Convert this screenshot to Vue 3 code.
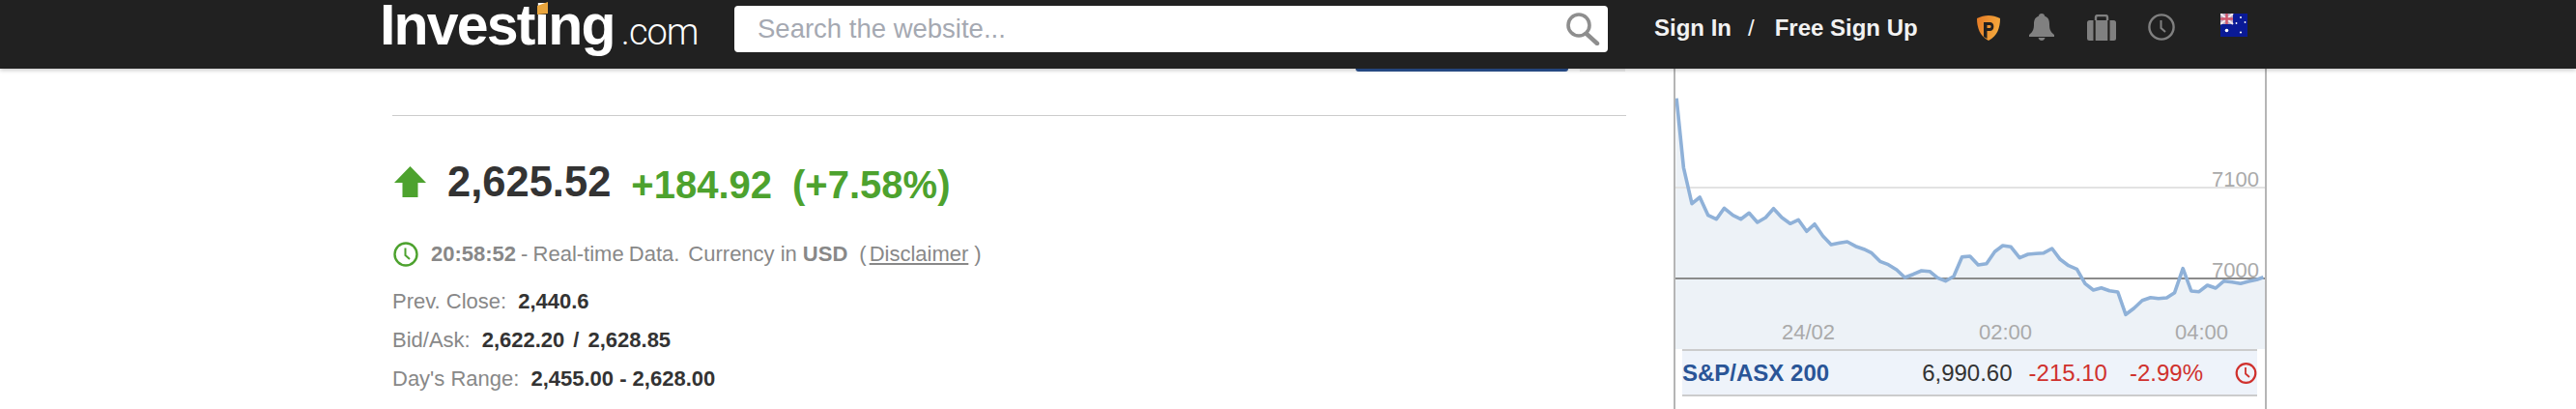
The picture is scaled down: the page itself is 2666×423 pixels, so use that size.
<template>
  <div class="page">
    <header class="topbar">
      <a class="logo">
        <span class="logo-main">Investing</span><span class="logo-com">.com</span>
        <svg class="logo-dot" width="12" height="13" viewBox="0 0 12 13"><polygon points="0,4 11,0 11,12 0,13" fill="#e9a53d" /></svg>
      </a>
      <div class="search">
        <span class="search-text">Search the website...</span>
        <svg width="36" height="34" viewBox="0 0 36 34">
          <circle cx="14" cy="13" r="11" fill="none" stroke="#8e8e8e" stroke-width="3.6" />
          <path d="M22 22 L33 32" stroke="#8e8e8e" stroke-width="4.4" stroke-linecap="round" />
        </svg>
      </div>
      <nav class="auth">
        <span>Sign In</span>
        <span class="slash">/</span>
        <span>Free Sign Up</span>
      </nav>
      <div class="icons">
        <svg class="ic-p" width="24" height="26" viewBox="0 0 24 26">
          <defs>
            <linearGradient id="shield" x1="0" y1="0" x2="1" y2="0.3">
              <stop offset="0" stop-color="#e57a25" />
              <stop offset="1" stop-color="#f4a83c" />
            </linearGradient>
          </defs>
          <path d="M12 0 C16 0 20 1 24 3 C24 13 21 21 12 26 C3 21 0 13 0 3 C4 1 8 0 12 0 Z" fill="url(#shield)" />
          <path d="M7 7 H14 C18.5 7 18.5 16 14 16 H10.5 V24 L7 22 Z M10.5 10 V13 H13.5 C15 13 15 10 13.5 10 Z" fill="#23211f" fill-rule="evenodd" />
        </svg>
        <svg class="ic-bell" width="26" height="28" viewBox="0 0 26 28">
          <path d="M13 0 C15 0 16 1 16 2.5 C20 4 21 7 21 11 C21 16 22 19 26 22 V24 H0 V22 C4 19 5 16 5 11 C5 7 6 4 10 2.5 C10 1 11 0 13 0 Z" fill="#808080" />
          <path d="M9.5 25 H16.5 C16 27 14.5 28 13 28 C11.500 28 10 27 9.500 25 Z" fill="#808080" />
        </svg>
        <svg class="ic-case" width="30" height="27" viewBox="0 0 30 27">
          <path d="M9 7 V3 C9 1.500 10 1 11 1 H19 C20 1 21 1.500 21 3 V7" fill="none" stroke="#808080" stroke-width="2.4" />
          <rect x="0" y="6" width="30" height="21" rx="2.500" fill="#808080" />
          <rect x="6.500" y="6" width="2.200" height="21" fill="#23211f" />
          <rect x="21.300" y="6" width="2.200" height="21" fill="#23211f" />
        </svg>
        <svg class="ic-clock" width="28" height="28" viewBox="0 0 28 28">
          <circle cx="14" cy="14" r="12.600" fill="none" stroke="#808080" stroke-width="2.400" />
          <path d="M13.500 7 V15 L18 19" fill="none" stroke="#808080" stroke-width="2" />
        </svg>
        <svg class="ic-flag" width="28" height="24" viewBox="0 0 28 24">
          <rect width="28" height="24" fill="#0a1a96" />
          <rect width="13" height="11" fill="#b9a9c4" />
          <path d="M0 0 L13 11 M13 0 L0 11" stroke="#f3e9ee" stroke-width="2" />
          <path d="M6.500 0 V11 M0 5.500 H13" stroke="#d0566c" stroke-width="2.400" />
          <g fill="#fff">
            <circle cx="6.500" cy="17.500" r="1.800" />
            <circle cx="21" cy="4" r="1" />
            <circle cx="16.500" cy="10" r="0.900" />
            <circle cx="25.500" cy="9" r="0.900" />
            <circle cx="21" cy="19.500" r="1.100" />
          </g>
        </svg>
      </div>
    </header>

    <main class="content">
      <section class="left">
        <div class="cut-buttons">
          <div class="cut-blue"></div>
          <div class="cut-grey"></div>
        </div>
        <div class="rule"></div>

        <div class="quote">
          <svg class="arrow" width="33" height="32" viewBox="0 0 33 32">
            <path d="M16.500 0 L33 17 H24.500 V32 H8.500 V17 H0 Z" fill="#4da22e" />
          </svg>
          <span class="last">2,625.52</span>
          <span class="chg first">+184.92</span>
          <span class="chg second">(+7.58%)</span>
        </div>

        <div class="meta">
          <svg width="26" height="26" viewBox="0 0 26 26">
            <circle cx="13" cy="13" r="11.500" fill="none" stroke="#4da22e" stroke-width="2.400" />
            <path d="M12.500 6.500 V14 L17 18" fill="none" stroke="#4da22e" stroke-width="2" />
          </svg>
          <b class="time">20:58:52</b>
          <span class="dash">- Real-time Data.</span>
          <span class="cur">Currency in</span>
          <b class="usd">USD</b>
          <span class="paren">(</span>
          <u class="disc">Disclaimer</u>
          <span class="paren-end">)</span>
        </div>

        <div class="stats">
          <div class="stat" v-for="s in stats" :key="s.label">
            <span class="stat-label">{{ s.label }}</span>
            <b class="stat-val" v-if="s.second">{{ s.value }}<span class="sep">/</span>{{ s.second }}</b>
            <b class="stat-val" v-else>{{ s.value }}</b>
          </div>
        </div>
      </section>

      <aside class="panel">
        <svg class="chart" width="610" height="290" viewBox="1 0 610 290">
          <polygon :points="areaPoints" fill="#edf2f7" />
          <line x1="0" x2="611" y1="123" y2="123" stroke="#e3e3e3" stroke-width="2" />
          <line x1="0" x2="611" y1="217" y2="217" stroke="#8b8b8b" stroke-width="2" />
          <polyline :points="linePoints" fill="none" stroke="#8fb1d8" stroke-width="3.600" stroke-linejoin="round" />
          <text class="axis" x="556" y="122">7100</text>
          <text class="axis" x="556" y="216">7000</text>
          <text class="axis" x="111" y="280">24/02</text>
          <text class="axis" x="315" y="280">02:00</text>
          <text class="axis" x="518" y="280">04:00</text>
        </svg>
        <div class="index-row">
          <span class="index-name">S&amp;P/ASX 200</span>
          <span class="index-val">6,990.60</span>
          <span class="index-chg">-215.10</span>
          <span class="index-pct">-2.99%</span>
          <svg width="23" height="22" viewBox="0 0 23 22">
            <circle cx="11.500" cy="11" r="9.800" fill="none" stroke="#d0312d" stroke-width="2.200" />
            <path d="M11 5 V11.500 L15 15" fill="none" stroke="#d0312d" stroke-width="1.800" />
          </svg>
        </div>
      </aside>
    </main>
  </div>
</template>

<script setup>
import { computed } from 'vue'

const stats = [
  { label: 'Prev. Close:', value: '2,440.6' },
  { label: 'Bid/Ask:', value: '2,622.20', second: '2,628.85' },
  { label: "Day's Range:", value: '2,455.00 - 2,628.00' }
]

// price line, read off the reference
const raw = [
  [37, 95], [55, 310], [76, 422], [96, 402], [117, 458], [138, 470], [158, 436], [180, 458], [200, 470],
  [221, 451], [242, 480], [263, 465], [283, 437], [304, 465], [325, 484], [346, 472], [367, 508], [387, 485],
  [408, 522], [429, 549], [450, 544], [470, 540], [491, 554], [512, 563], [532, 575], [553, 601], [574, 611],
  [595, 627], [616, 651], [637, 641], [658, 630], [679, 632], [699, 652], [719, 662], [740, 647], [761, 587],
  [781, 585], [802, 612], [823, 608], [844, 571], [864, 552], [885, 556], [907, 590], [928, 579], [948, 577],
  [968, 575], [989, 561], [1010, 595], [1031, 614], [1052, 625], [1073, 670], [1094, 690], [1114, 683],
  [1135, 692], [1156, 696], [1176, 766], [1197, 746], [1218, 722], [1239, 713], [1259, 716], [1280, 714],
  [1300, 698], [1321, 623], [1342, 693], [1362, 695], [1383, 675], [1404, 684], [1425, 662], [1446, 665],
  [1467, 670], [1488, 663], [1508, 658], [1525, 650]
]

const pts = raw.map(([x, y]) => [+(x / 2.45 - 13).toFixed(1), +(y / 3 - 1).toFixed(1)])
const linePoints = computed(() => pts.map((p) => p.join(',')).join(' '))
const areaPoints = computed(() => `0,290 ${linePoints.value} 611,${pts[pts.length - 1][1]} 611,290`)
</script>

<style>
body {
  margin: 0;
  background: #fff;
}
</style>

<style scoped>
.page {
  width: 2666px;
  height: 423px;
  overflow: hidden;
  font-family: "Liberation Sans", Arial, sans-serif;
  color: #333;
}
.topbar {
  position: relative;
  z-index: 2;
  display: flex;
  align-items: flex-start;
  height: 71px;
  padding-left: 393px;
  background: #212121;
  box-shadow: 0 2px 4px rgba(0, 0, 0, 0.2);
}
.logo {
  position: relative;
  display: flex;
  align-items: baseline;
  width: 367px;
  height: 71px;
  line-height: 52px;
  color: #fff;
}
.logo-main {
  font-size: 59px;
  font-weight: 700;
  letter-spacing: -1.8px;
}
.logo-com {
  margin-left: 7px;
  font-family: Roboto, "Liberation Sans", sans-serif;
  font-size: 38px;
  font-weight: 300;
  letter-spacing: -1px;
}
.logo-dot {
  position: absolute;
  left: 163px;
  top: 2px;
}
.search {
  display: flex;
  align-items: center;
  justify-content: space-between;
  box-sizing: border-box;
  width: 904px;
  height: 48px;
  margin-top: 6px;
  padding: 0 8px 0 24px;
  background: #fff;
  border-radius: 4px;
}
.search-text {
  font-size: 27.5px;
  color: #a5a9b2;
}
.auth {
  display: flex;
  align-items: center;
  height: 58px;
  margin-left: 48px;
  font-size: 24px;
  font-weight: 700;
  color: #f2f2f2;
}
.slash {
  margin: 0 21px 0 17px;
  font-weight: 400;
}
.icons {
  display: flex;
  align-items: flex-start;
  margin-left: 61px;
  padding-top: 14px;
}
.ic-p {
  margin-top: 2px;
}
.ic-bell {
  margin-left: 30px;
}
.ic-case {
  margin-left: 34px;
  margin-top: 1px;
}
.ic-clock {
  margin-left: 33px;
}
.ic-flag {
  margin-left: 47px;
}

.content {
  display: flex;
  gap: 49px;
  padding-left: 406px;
}
.left {
  width: 1277px;
}
.cut-buttons {
  display: flex;
  justify-content: flex-end;
  gap: 12px;
  height: 3px;
  padding-right: 1px;
}
.cut-blue {
  width: 220px;
  background: #2a5190;
  border-radius: 0 0 3px 3px;
}
.cut-grey {
  width: 47px;
  background: #ededed;
}
.rule {
  height: 1px;
  margin-top: 45px;
  background: #ccc;
}
.quote {
  display: flex;
  align-items: center;
  height: 50px;
  margin-top: 43px;
}
.arrow {
  margin-left: 2px;
}
.last {
  margin-left: 22px;
  font-size: 43.5px;
  font-weight: 700;
  color: #333;
}
.chg {
  padding-top: 7px;
  font-size: 40px;
  font-weight: 700;
  color: #4da22e;
}
.first {
  margin-left: 21px;
}
.second {
  margin-left: 21px;
}
.meta {
  display: flex;
  align-items: center;
  height: 26px;
  margin-top: 37px;
  font-size: 22px;
  color: #888;
}
.meta svg {
  margin-left: 1px;
}
.time {
  margin-left: 13px;
}
.dash {
  margin-left: 5px;
  word-spacing: -1px;
}
.cur {
  margin-left: 9px;
}
.usd {
  margin-left: 6px;
}
.paren {
  margin-left: 12px;
}
.disc {
  margin-left: 3px;
}
.paren-end {
  margin-left: 6px;
}
.stats {
  margin-top: 16px;
}
.stat {
  display: flex;
  height: 40px;
  line-height: 40px;
  font-size: 22px;
}
.stat-label {
  color: #888;
}
.stat-val {
  margin-left: 12px;
  color: #333;
  white-space: pre;
}
.sep {
  margin: 0 9px;
}

.panel {
  box-sizing: border-box;
  width: 614px;
  height: 352px;
  border-left: 2px solid #b5b5b5;
  border-right: 2px solid #b5b5b5;
}
.chart {
  display: block;
}
.axis {
  font-size: 22px;
  fill: #aaa;
}
.index-row {
  display: flex;
  align-items: center;
  box-sizing: border-box;
  height: 49px;
  margin: 0 8px 0 7px;
  background: #eef3fa;
  border-top: 2px solid #ccc;
  border-bottom: 2px solid #ccc;
  font-size: 24px;
}
.index-name {
  font-weight: 700;
  color: #2a5597;
}
.index-val {
  margin-left: auto;
  color: #333;
}
.index-chg {
  margin-left: 17px;
  color: #d0312d;
}
.index-pct {
  margin-left: 23px;
  color: #d0312d;
}
.index-row svg {
  margin-left: 33px;
}
</style>
